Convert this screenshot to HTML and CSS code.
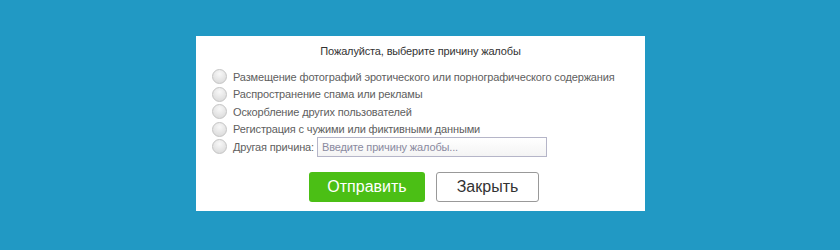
FILE: index.html
```html
<!DOCTYPE html>
<html>
<head>
<meta charset="utf-8">
<link rel="stylesheet" href="styles.css">
</head>
<body>
<div class="panel">
  <div class="title">Пожалуйста, выберите причину жалобы</div>
  <div class="options">
    <label class="opt"><span class="radio"></span>Размещение фотографий эротического или порнографического содержания</label>
    <label class="opt"><span class="radio"></span>Распространение спама или рекламы</label>
    <label class="opt"><span class="radio"></span>Оскорбление других пользователей</label>
    <label class="opt"><span class="radio"></span>Регистрация с чужими или фиктивными данными</label>
    <label class="opt"><span class="radio"></span>Другая причина:<span class="input">Введите причину жалобы...</span></label>
  </div>
  <div class="buttons">
    <span class="btn send">Отправить</span>
    <span class="btn close">Закрыть</span>
  </div>
</div>
</body>
</html>
```
FILE: styles.css
```css
html, body { margin: 0; padding: 0; }
body {
  width: 840px; height: 250px;
  background: #2199c4;
  font-family: "Liberation Sans", Arial, sans-serif;
  padding-top: 36px;
  box-sizing: border-box;
}
.panel {
  margin-left: 196px;
  width: 449px;
  height: 175px;
  background: #fff;
  box-sizing: border-box;
  padding-top: 8px;
}
.title {
  text-align: center;
  font-size: 11px;
  letter-spacing: -0.15px;
  color: #333;
  line-height: 14px;
  height: 14px;
}
.options {
  margin-top: 10px;
  padding-left: 16px;
  display: flex;
  flex-direction: column;
}
.opt {
  display: flex;
  align-items: center;
  height: 17.5px;
  font-size: 11px;
  letter-spacing: -0.15px;
  color: #606060;
  white-space: nowrap;
}
.radio {
  width: 13px; height: 13px;
  border-radius: 50%;
  border: 1px solid #c4c4c4;
  background: radial-gradient(circle at 50% 30%, #f8f8f8, #d6d6d6);
  margin-right: 6px;
  flex: none;
}
.input {
  margin-left: 3px;
  width: 230px;
  height: 20px;
  box-sizing: border-box;
  border: 1px solid #b5b5c8;
  background: linear-gradient(#fff, #f4f4f4);
  color: #8a8aa0;
  padding-left: 4px;
  line-height: 18px;
  font-size: 11px;
}
.buttons {
  margin-top: 16px;
  display: flex;
  justify-content: center;
  gap: 11px;
  padding-left: 7px;
}
.btn {
  height: 30px;
  box-sizing: border-box;
  border-radius: 3px;
  display: flex;
  align-items: center;
  justify-content: center;
  font-family: "Liberation Sans", Arial, sans-serif;
  font-size: 16px;
}
.send {
  width: 116px;
  background: #4bbf15;
  color: #fff;
}
.close {
  width: 103px;
  border: 1px solid #999;
  color: #333;
  background: #fff;
}
```
